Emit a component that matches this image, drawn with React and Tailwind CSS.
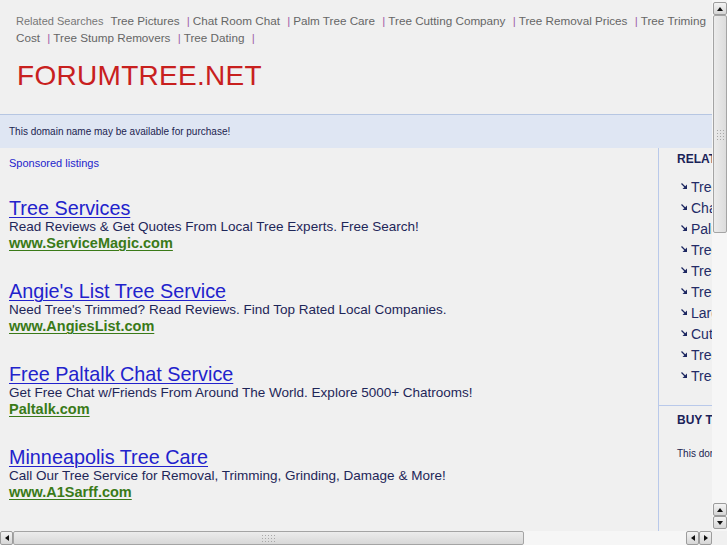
import React from 'react';

const topLinks1 = ['Tree Pictures', 'Chat Room Chat', 'Palm Tree Care', 'Tree Cutting Company', 'Tree Removal Prices', 'Tree Triming'];
const topLinks2 = ['Tree Stump Removers', 'Tree Dating'];

const ads = [
  { title: 'Tree Services', desc: 'Read Reviews & Get Quotes From Local Tree Experts. Free Search!', url: 'www.ServiceMagic.com' },
  { title: "Angie's List Tree Service", desc: "Need Tree's Trimmed? Read Reviews. Find Top Rated Local Companies.", url: 'www.AngiesList.com' },
  { title: 'Free Paltalk Chat Service', desc: 'Get Free Chat w/Friends From Around The World. Explore 5000+ Chatrooms!', url: 'Paltalk.com' },
  { title: 'Minneapolis Tree Care', desc: 'Call Our Tree Service for Removal, Trimming, Grinding, Damage & More!', url: 'www.A1Sarff.com' },
];

const related = ['Tree Pictures', 'Chat Room Chat', 'Palm Tree Care', 'Tree Cutting Company', 'Tree Removal Prices', 'Tree Triming Cost', 'Large Tree Removal', 'Cutting Down Trees', 'Tree Stump Removers', 'Tree Dating'];

function Sep() {
  return <span className="text-[#a060a8] ml-[4px] mr-[3px]">|</span>;
}

function Bullet() {
  return (
    <svg width="6" height="6" viewBox="0 0 6 6" className="shrink-0 mb-[3px]">
      <path d="M0.5 0.5 L4 4" stroke="#1c2660" strokeWidth="1.2" />
      <path d="M6 1.5 L6 6 L1.5 6 Z" fill="#1c2660" />
    </svg>
  );
}

function ArrowBtn({ dir, className = '' }) {
  const paths = {
    up: 'M1 5 L4 1 L7 5 Z',
    down: 'M1 1 L4 5 L7 1 Z',
    left: 'M5 1 L1 4 L5 7 Z',
    right: 'M1 1 L5 4 L1 7 Z',
  };
  const vert = dir === 'up' || dir === 'down';
  return (
    <div className={`flex items-center justify-center rounded-[2px] border border-[#9c9c9c] bg-gradient-to-b from-[#f4f4f4] to-[#d6d6d6] ${className}`}>
      <svg width={vert ? 8 : 6} height={vert ? 6 : 8} viewBox={vert ? '0 0 8 6' : '0 0 6 8'}>
        <path d={paths[dir]} fill="#111" />
      </svg>
    </div>
  );
}

function Grip({ vertical }) {
  return (
    <div className={`grid ${vertical ? 'grid-cols-3 gap-[2px]' : 'grid-cols-5 gap-[2px]'}`}>
      {[...Array(vertical ? 12 : 15)].map((_, i) => (
        <div key={i} className="w-[1px] h-[1px] bg-[#a8a8a8]" />
      ))}
    </div>
  );
}

export default function App() {
  return (
    <div className="w-[727px] h-[545px] overflow-hidden bg-[#f0f0f0] flex flex-col" style={{ fontFamily: '"Liberation Sans", Arial, sans-serif' }}>
      <div className="flex h-[531px]">
        {/* page viewport */}
        <div className="w-[712px] h-[531px] overflow-hidden">
          <div className="w-[934px]">
            {/* header */}
            <div className="pl-[16px] pt-[12px] text-[11.7px] text-[#666]">
              <div className="whitespace-nowrap h-[17px] leading-[17px]">
                <span className="text-[11px] text-[#777] mr-[7px]">Related Searches</span>
                {topLinks1.map((l, i) => (
                  <span key={l}>
                    {i > 0 && <Sep />}
                    <span>{l}</span>
                    {' '}
                  </span>
                ))}
              </div>
              <div className="whitespace-nowrap h-[17px] leading-[17px]">
                <span>Cost </span>
                {topLinks2.map((l) => (
                  <span key={l}>
                    <Sep />
                    <span>{l}</span>{' '}
                  </span>
                ))}
                <Sep />
              </div>
            </div>
            <div className="pl-[17px] mt-[14px] text-[28px] leading-[32px] text-[#c8201e] tracking-[0.3px]">FORUMTREE.NET</div>

            {/* notice band */}
            <div className="mt-[22px] border-t border-[#b6c6e2] bg-[#dfe6f3] h-[34px] flex items-center pl-[9px] pb-[1px] text-[10px] text-[#1c2450]">
              This domain name may be available for purchase!
            </div>

            {/* body */}
            <div className="flex">
              <div className="w-[659px] shrink-0 border-r border-[#b9c9ea] pl-[9px] h-[400px]">
                <div className="pt-[8px] text-[11px] leading-[14px] text-[#2424cc]">Sponsored listings</div>
                <div className="mt-[29px] flex flex-col gap-[30px]">
                  {ads.map((a) => (
                    <div key={a.title}>
                      <div className="text-[19.8px] leading-[19px] text-[#2222cc] underline underline-offset-[2px] decoration-1">{a.title}</div>
                      <div className="text-[13.5px] leading-[17px] text-[#1e2658]">{a.desc}</div>
                      <div className="text-[14.5px] leading-[17px] font-bold text-[#3a7a18] underline underline-offset-[2px] decoration-1">{a.url}</div>
                    </div>
                  ))}
                </div>
              </div>

              <div className="w-[275px] shrink-0">
                <div className="pl-[18px] pt-[4px] pb-[18px]">
                  <div className="text-[12px] leading-[14px] font-bold text-[#1a2258] whitespace-nowrap">RELATED SEARCHES</div>
                  <div className="mt-[11px] flex flex-col pl-[4px]">
                    {related.map((r) => (
                      <div key={r} className="h-[21px] flex items-center gap-[4px] text-[14px] text-[#232b66] whitespace-nowrap">
                        <Bullet />
                        <span>{r}</span>
                      </div>
                    ))}
                  </div>
                </div>
                <div className="border-t border-[#b9c9ea] pl-[18px] pt-[7px]">
                  <div className="text-[12px] leading-[14px] font-bold text-[#1a2258] whitespace-nowrap">BUY THIS DOMAIN</div>
                  <div className="mt-[20px] text-[10px] leading-[13px] text-[#1c2450] whitespace-nowrap">This domain may be for sale. Click here to inquire.</div>
                </div>
              </div>
            </div>
          </div>
        </div>

        {/* vertical scrollbar */}
        <div className="w-[15px] flex flex-col pt-[2px] pl-[1px] pb-[2px] bg-[#f6f6f6]">
          <ArrowBtn dir="up" className="h-[13px] w-[14px]" />
          <div className="h-[218px] w-[14px] rounded-[2px] border border-[#a4a4a4] bg-gradient-to-r from-[#ececec] to-[#dcdcdc] flex items-end justify-center pb-[4px]">
            <div className="mb-[88px]"><Grip vertical /></div>
          </div>
          <div className="flex-1" />
          <ArrowBtn dir="up" className="h-[13px] w-[14px]" />
          <ArrowBtn dir="down" className="h-[13px] w-[14px]" />
        </div>
      </div>

      {/* horizontal scrollbar */}
      <div className="flex h-[14px]">
        <div className="w-[712px] flex bg-[#f6f6f6]">
          <ArrowBtn dir="left" className="w-[13px] h-[14px]" />
          <div className="w-[511px] h-[14px] rounded-[2px] border border-[#a4a4a4] bg-gradient-to-b from-[#ececec] to-[#d8d8d8] flex items-center justify-center">
            <Grip />
          </div>
          <div className="flex-1" />
          <ArrowBtn dir="left" className="w-[13px] h-[14px]" />
          <ArrowBtn dir="right" className="w-[13px] h-[14px]" />
        </div>
        <div className="w-[15px] bg-[#f0f0f0]" />
      </div>
    </div>
  );
}
